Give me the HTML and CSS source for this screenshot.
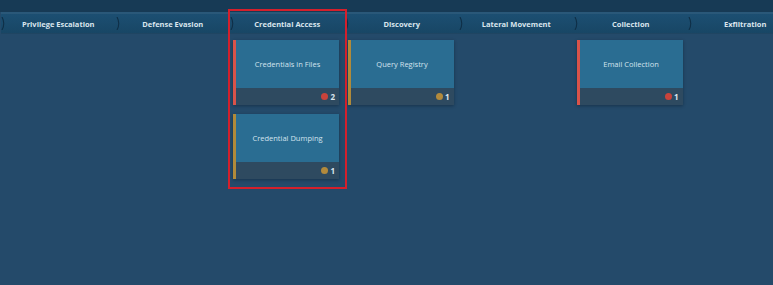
FILE: index.html
```html
<!DOCTYPE html>
<html lang="en">
<head>
    <meta charset="UTF-8">
    <meta name="viewport" content="width=device-width, initial-scale=1.0">
    <title>Attack Matrix</title>
    <link rel="stylesheet" href="styles.css">
</head>
<body>
    <div class="topbar"></div>
    <div class="tactics">
        <div class="tactic"><svg class="chevron" viewBox="0 0 5 13"><path d="M1 0 Q4.5 6.5 1 13"/></svg>Privilege Escalation</div>
        <div class="tactic"><svg class="chevron" viewBox="0 0 5 13"><path d="M1 0 Q4.5 6.5 1 13"/></svg>Defense Evasion</div>
        <div class="tactic"><svg class="chevron" viewBox="0 0 5 13"><path d="M1 0 Q4.5 6.5 1 13"/></svg>Credential Access</div>
        <div class="tactic"><svg class="chevron" viewBox="0 0 5 13"><path d="M1 0 Q4.5 6.5 1 13"/></svg>Discovery</div>
        <div class="tactic"><svg class="chevron" viewBox="0 0 5 13"><path d="M1 0 Q4.5 6.5 1 13"/></svg>Lateral Movement</div>
        <div class="tactic"><svg class="chevron" viewBox="0 0 5 13"><path d="M1 0 Q4.5 6.5 1 13"/></svg>Collection</div>
        <div class="tactic"><svg class="chevron" viewBox="0 0 5 13"><path d="M1 0 Q4.5 6.5 1 13"/></svg>Exfiltration</div>
    </div>
    <div class="matrix">
        <div class="column"></div>
        <div class="column"></div>
        <div class="column">
            <div class="card high">
                <div class="card-title">Credentials in Files</div>
                <div class="card-foot"><span class="dot"></span>2</div>
            </div>
            <div class="card medium">
                <div class="card-title">Credential Dumping</div>
                <div class="card-foot"><span class="dot"></span>1</div>
            </div>
        </div>
        <div class="column">
            <div class="card medium">
                <div class="card-title">Query Registry</div>
                <div class="card-foot"><span class="dot"></span>1</div>
            </div>
        </div>
        <div class="column"></div>
        <div class="column">
            <div class="card high">
                <div class="card-title">Email Collection</div>
                <div class="card-foot"><span class="dot"></span>1</div>
            </div>
        </div>
        <div class="column"></div>
    </div>
    <div class="highlight"></div>
</body>
</html>
```

FILE: styles.css
```css
body {
    margin: 0;
    width: 773px;
    height: 285px;
    overflow: hidden;
    position: relative;
    background-color: #244a6a;
    font-family: "Open Sans", "Liberation Sans", sans-serif;
}
.topbar {
    height: 12px;
    background-color: #173a55;
}
.tactics {
    display: grid;
    grid-template-columns: repeat(7, 114.5px);
    margin-left: 1px;
    height: 19px;
    border-top: 2px solid #2a5879;
    background: linear-gradient(#1c4f72, #184665);
    border-bottom: 1px solid #1f4562;
}
.tactic {
    position: relative;
    display: flex;
    align-items: center;
    justify-content: center;
    color: #dbe6ee;
    font-size: 7.5px;
    font-weight: 700;
    white-space: nowrap;
}
.chevron {
    position: absolute;
    left: 0;
    top: 3px;
    width: 5px;
    height: 13px;
    fill: none;
    stroke: #0f2f47;
    stroke-width: 1.1;
}
.matrix {
    display: grid;
    grid-template-columns: repeat(7, 114.5px);
    margin-left: 1px;
    padding-top: 6px;
}
.column {
    display: flex;
    flex-direction: column;
    gap: 9px;
    padding-left: 3px;
}
.card {
    width: 106px;
    box-sizing: border-box;
    border-left: 3px solid;
    box-shadow: 0 1px 3px rgba(8, 24, 40, 0.45);
}
.card.high {
    border-left-color: #d9534a;
}
.card.medium {
    border-left-color: #b08a3a;
}
.card-title {
    height: 48px;
    display: flex;
    align-items: center;
    justify-content: center;
    background-color: #2a6d92;
    color: #d3e3ee;
    font-size: 7.5px;
}
.card-foot {
    height: 17px;
    display: flex;
    align-items: center;
    justify-content: flex-end;
    gap: 2px;
    padding-right: 4px;
    background-color: #2e4a60;
    color: #dbe6ee;
    font-size: 8px;
    font-weight: 700;
}
.dot {
    width: 7px;
    height: 7px;
    border-radius: 50%;
}
.high .dot {
    background-color: #c9433b;
}
.medium .dot {
    background-color: #b28a3c;
}
.highlight {
    position: absolute;
    left: 228px;
    top: 9px;
    width: 115px;
    height: 176px;
    border: 2px solid #d4202c;
}
```
